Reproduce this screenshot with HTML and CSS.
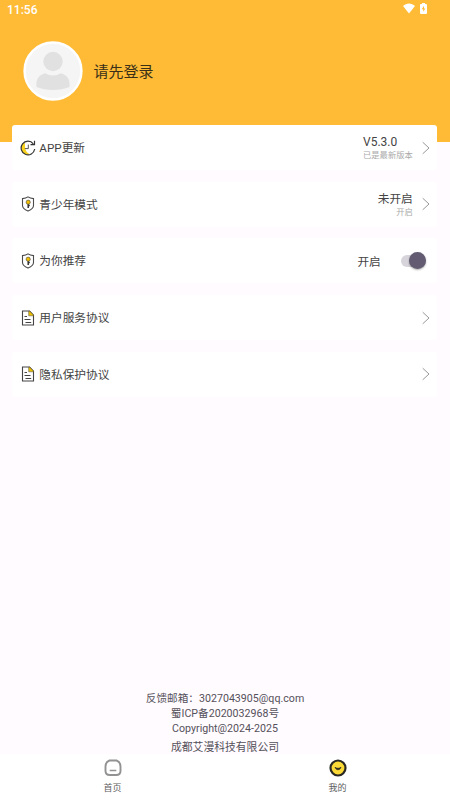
FILE: index.html
```html
<!DOCTYPE html>
<html lang="zh-CN">
<head>
<meta charset="utf-8">
<title>我的</title>
<link rel="stylesheet" href="styles.css">
</head>
<body>
<svg class="defs" width="0" height="0" aria-hidden="true">
  <symbol id="chevron" viewBox="0 0 8 14"><path d="M.7 1.2 7 7 .7 12.8" fill="none" stroke="#8c8c8c" stroke-width=".9"/></symbol>
  <symbol id="shield" viewBox="0 0 16 16">
    <path d="M8 .9C6.4 2.1 4.600 2.500 2.500 2.600V9.500C2.500 12 5 13.800 8 15.100 11 13.800 13.500 12 13.500 9.500V2.600C11.400 2.500 9.600 2.100 8 .9Z" fill="#fff" stroke="#4b4b4b" stroke-width="1.100"/>
    <path d="M8.200 7v5M8.300 9.500h1.500" stroke="#333" stroke-width="1.500"/>
    <circle cx="8.200" cy="6.200" r="2.100" fill="#f0c000" stroke="#444" stroke-width=".6"/>
  </symbol>
  <symbol id="document" viewBox="0 0 16 16">
    <path d="M9.500 1H2.500v14h11V5.200Z" fill="#fff" stroke="#444" stroke-width="1.100"/>
    <path d="M8.700 1v4.800h4.800V5L9.500 1Z" fill="#eec000" stroke="#444" stroke-width=".5"/>
    <path d="M4.500 6.500H7M4.500 9.500h6M5.500 12.500h5.700" stroke="#444" stroke-width="1"/>
  </symbol>
</svg>
<div class="screen">
  <header class="header">
    <div class="status">
      <span>11:56</span>
      <div class="status-icons">
        <svg width="12" height="11" viewBox="0 0 12 11"><path d="M0 3C3.500-.4 8.500-.4 12 3L6 10.500Z" fill="#fff"/></svg>
        <svg width="7" height="11" viewBox="0 0 7 11"><path d="M2 0h3v1h1q1 0 1 1v8q0 1-1 1H1q-1 0-1-1V2q0-1 1-1h1Z" fill="#fff"/><path d="M4 2.800 1.700 6.200h1.500v2.600l2.200-3.400H4Z" fill="#ffbb35"/></svg>
      </div>
    </div>
    <div class="profile">
      <svg class="avatar" viewBox="0 0 60 60"><circle cx="30" cy="30" r="28.400" fill="#f5f5f5" stroke="#fff" stroke-width="2.500"/><circle cx="30" cy="20.500" r="9.700" fill="#e1e1e1"/><path d="M13.500 46C12.500 37 17 33.500 22.500 32.300 27 35.200 33 35.200 37.500 32.300 43 33.500 47.500 37 46.500 46 37 50 23 50 13.500 46Z" fill="#e1e1e1"/></svg>
      <span class="login">请先登录</span>
    </div>
  </header>
  <main class="list">
    <section class="card">
      <svg class="icon" viewBox="0 0 16 16"><path d="M2.500 3.500C-.3 8 2 14.500 8 14.700L9.500 14C6 12.500 4.500 9 5 3Z" fill="#f8d21c"/><path d="M13.300 3.800A6.800 6.800 0 1 0 14.700 9" fill="none" stroke="#333" stroke-width="1.200"/><path d="M14.500.8v3.800h-4" fill="none" stroke="#333" stroke-width="1.200"/><path d="M8.300 4.600v4H4.800" fill="none" stroke="#555" stroke-width="1"/></svg>
      <span class="label">APP更新</span>
      <div class="value start"><b>V5.3.0</b><small>已是最新版本</small></div>
      <svg class="chevron"><use href="#chevron"/></svg>
    </section>
    <section class="card">
      <svg class="icon"><use href="#shield"/></svg>
      <span class="label">青少年模式</span>
      <div class="value"><b>未开启</b><small>开启</small></div>
      <svg class="chevron"><use href="#chevron"/></svg>
    </section>
    <section class="card">
      <svg class="icon"><use href="#shield"/></svg>
      <span class="label">为你推荐</span>
      <span class="state">开启</span>
      <span class="switch"><i class="thumb"></i></span>
    </section>
    <section class="card">
      <svg class="icon"><use href="#document"/></svg>
      <span class="label">用户服务协议</span>
      <svg class="chevron"><use href="#chevron"/></svg>
    </section>
    <section class="card">
      <svg class="icon"><use href="#document"/></svg>
      <span class="label">隐私保护协议</span>
      <svg class="chevron"><use href="#chevron"/></svg>
    </section>
  </main>
  <footer class="about">
    <p>反馈邮箱：3027043905@qq.com</p>
    <p>蜀ICP备2020032968号</p>
    <p>Copyright@2024-2025</p>
    <p class="company">成都艾漫科技有限公司</p>
  </footer>
  <nav class="tabs">
    <div class="tab">
      <svg width="18" height="18" viewBox="0 0 18 18"><path d="M5.500 1.500h7Q16.500 3 16.500 7.500v4.500q0 4-4.300 4H5.800q-4.300 0-4.300-4V7.500Q1.500 3 5.500 1.500Z" fill="#fff" stroke="#929292" stroke-width="1.900"/><path d="M5.700 11.500h6.600" stroke="#929292" stroke-width="1.500"/></svg>
      <span>首页</span>
    </div>
    <div class="tab">
      <svg width="18" height="18" viewBox="0 0 18 18"><circle cx="9" cy="9" r="7.500" fill="#fbd936" stroke="#292823" stroke-width="2.200"/><path d="M6 8.300q1 2.500 3 2.500t3-2.500q-1.500 1-3 1T6 8.300Z" fill="#292823" stroke="#292823" stroke-width=".7"/></svg>
      <span>我的</span>
    </div>
  </nav>
</div>
</body>
</html>
```
FILE: styles.css
```css
* { box-sizing: border-box; }
body { margin: 0; font-family: Roboto, "Noto Sans CJK SC", sans-serif; color: #444; }
.defs { position: absolute; }
.screen { width: 450px; height: 800px; display: flex; flex-direction: column; background: #fffbff; overflow: hidden; }
.header { flex: none; height: 141.500px; background: #ffbb35; }
.status { height: 20px; padding: 0 23px 0 7px; display: flex; justify-content: space-between; align-items: center; color: #fff; font-size: 12px; font-weight: 500; }
.status-icons { display: flex; gap: 5px; margin-top: -3px; }
.profile { display: flex; align-items: center; padding: 21px 0 0 23px; gap: 10.500px; }
.avatar { width: 60px; height: 60px; }
.login { font-size: 15px; line-height: 22px; padding-top: 2px; color: #3a3018; }
.list { display: flex; flex-direction: column; gap: 11.700px; margin: -16.500px 12.700px 0 12.300px; }
.card { height: 45px; display: flex; align-items: center; background: #fff; border-radius: 3px; padding: 0 7.500px 0 8px; }
.icon { width: 16px; height: 16px; flex: none; }
.label { margin-left: 3px; padding-top: 1px; flex: 1; font-size: 11.700px; line-height: 18px; }
.value { display: flex; flex-direction: column; align-items: flex-end; margin-right: 9px; padding-top: 1px; }
.value.start { align-items: flex-start; }
.value b { font-size: 11.700px; font-weight: 400; line-height: 15px; }
.value.start b { font-size: 12px; }
.value small { font-size: 8.300px; line-height: 11px; color: #aaa; }
.chevron { width: 8px; height: 14px; flex: none; }
.state { font-size: 11.700px; margin-right: 20px; }
.switch { display: flex; align-items: center; justify-content: flex-end; width: 25px; height: 12px; border-radius: 6px; background: #d7d5db; margin-right: 4px; }
.thumb { width: 17px; height: 17px; flex: none; border-radius: 50%; background: #625b71; box-shadow: 0 1px 2px #0005; }
.about { margin-top: auto; text-align: center; font-size: 10.650px; line-height: 15px; color: #55515a; position: relative; top: 1px; }
.about p { margin: 0; }
.about .company { margin-top: 4px; font-size: 10.800px; }
.tabs { flex: none; height: 46px; background: #fff; display: flex; }
.tab { flex: 1; display: flex; flex-direction: column; align-items: center; padding-top: 5px; font-size: 9px; color: #606060; }
.tab span { line-height: 13px; margin-top: 4.500px; }
```
